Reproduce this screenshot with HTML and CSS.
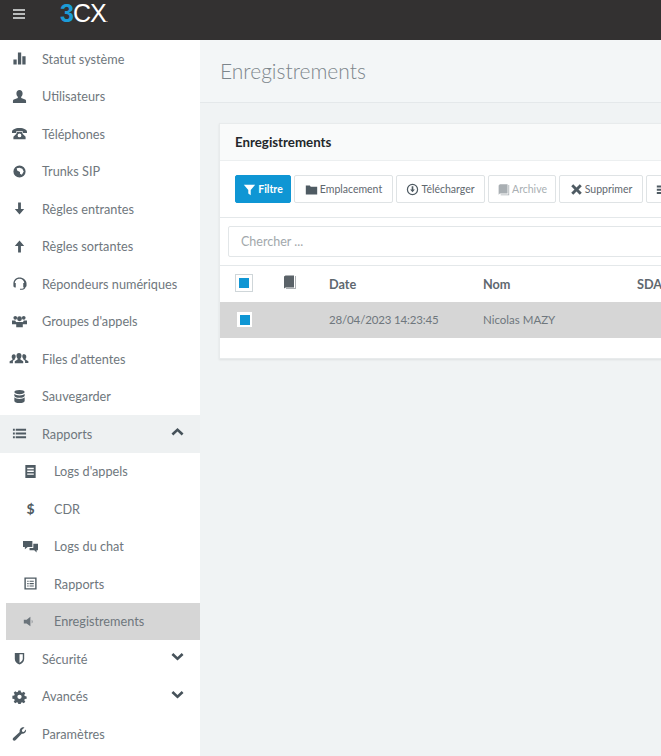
FILE: index.html
```html
<!DOCTYPE html>
<html lang="fr">
<head>
    <meta charset="UTF-8">
    <title>3CX - Enregistrements</title>
    <link rel="stylesheet" href="styles.css">
</head>
<body>
    <header class="topbar">
        <svg class="burger" viewBox="0 0 12 10"><path d="M0 0h12v2H0zM0 4h12v2H0zM0 8h12v2H0z"/></svg>
        <div class="logo"><span class="logo-three">3</span>CX<span class="logo-tm">.</span></div>
    </header>
    <div class="layout">
        <nav class="sidebar">
            <a class="item"><svg class="icon" viewBox="0 0 16 16"><path d="M1.500 9h3.500v5.500H1.500zM6.300 1.500h3.500v13H6.300zM11 5.500h3.500v9H11z"/></svg>Statut système</a>
            <a class="item"><svg class="icon" viewBox="0 0 16 16"><path d="M8 1c2 0 3.300 1.500 3.300 3.800 0 1.500-.7 2.800-1.500 3.500v1.200l4.200 1.800c.7.300 1 .9 1 1.700V15H1v-2c0-.8.300-1.400 1-1.700l4.200-1.800V8.300C5.400 7.600 4.700 6.300 4.700 4.800 4.700 2.500 6 1 8 1z"/></svg>Utilisateurs</a>
            <a class="item"><svg class="icon" viewBox="0 0 16 16"><path d="M0 6c0-2 3-4 8-4s8 2 8 4v1.500h-4.500V5.500h-7v2H0zM4.500 8.500l1-2h5l1 2 3 3V14h-13v-2.500zM8 8a2 2 0 1 0 0 4 2 2 0 0 0 0-4z" fill-rule="evenodd"/></svg>Téléphones</a>
            <a class="item"><svg class="icon" viewBox="0 0 16 16"><path d="M8 1.500a6.500 6.500 0 1 0 0 13 6.500 6.500 0 0 0 0-13zM8 4l3 1 1.500 3-2 3.500-2-1V8.500L5.500 7 5 4.500z" fill-rule="evenodd"/></svg>Trunks SIP</a>
            <a class="item"><svg class="icon" viewBox="0 0 16 16"><path d="M6.500 1.500h3v7h3.500L8 14.500 3 8.500h3.500z"/></svg>Règles entrantes</a>
            <a class="item"><svg class="icon" viewBox="0 0 16 16"><path d="M6.500 14.500V7.500H3L8 1.500l5 6H9.500v7z"/></svg>Règles sortantes</a>
            <a class="item"><svg class="icon" viewBox="0 0 16 16"><path d="M8 1.500c-3.900 0-6.500 2.800-6.500 6.500v2.500c0 1 .7 1.800 1.700 1.800h.8V7.500H2.900C3.200 4.800 5.200 2.900 8 2.900s4.800 1.900 5.100 4.600H12v4.800h.9c-.3.800-1 1.100-1.900 1.200H8.500v1.200H11c1.700 0 3-1 3.400-2.600.7-.3 1.100-1 1.100-1.600V8c0-3.700-3.600-6.500-7.500-6.500z"/></svg>Répondeurs numériques</a>
            <a class="item"><svg class="icon" viewBox="0 0 16 16"><circle cx="3.500" cy="4" r="2"/><circle cx="12.500" cy="4" r="2"/><circle cx="8" cy="5" r="2.600"/><path d="M0 7h3.500l1 2v2H0zM16 7h-3.500l-1 2v2H16zM4.500 8.500h7v5.500h-7z"/></svg>Groupes d'appels</a>
            <a class="item"><svg class="icon icon-wide" viewBox="0 0 20 16"><path d="M10 2c1.800 0 2.700 1.400 2.700 3.100 0 1.300-.5 2.300-1.200 2.900v1l3 2v2H5.500v-2l3-2V8C7.800 7.400 7.300 6.400 7.300 5.100 7.300 3.400 8.200 2 10 2zM4.500 3.500C6 3.500 6.500 4.600 6.500 6c0 1-.4 1.800-1 2.300v.7l-2 1.500v2.500H0v-2l3-1.800V8.300C2.400 7.800 2.200 7 2.200 6c0-1.400.8-2.500 2.300-2.500zM15.500 3.500c1.500 0 2.300 1.100 2.300 2.500 0 1-.2 1.800-.8 2.300v.7l3 1.800v2h-3.500v-2.500l-2-1.500v-.7c-.6-.5-1-1.300-1-2.300 0-1.400.5-2.500 2-2.500z"/></svg>Files d'attentes</a>
            <a class="item"><svg class="icon" viewBox="0 0 16 16"><path d="M8 1c3.300 0 5.500 1 5.500 2.300S11.300 5.600 8 5.600 2.500 4.600 2.500 3.300 4.700 1 8 1zM2.500 5c1 1 3 1.800 5.500 1.800S12.500 6 13.500 5v2.200c0 1.200-2.200 2.200-5.500 2.200s-5.500-1-5.500-2.200zM2.500 8.900c1 1 3 1.700 5.500 1.700s4.500-.7 5.500-1.700v3.800c0 1.300-2.200 2.300-5.500 2.300s-5.500-1-5.500-2.300z"/></svg>Sauvegarder</a>
            <a class="item item-open"><svg class="icon" viewBox="0 0 16 16"><path d="M1 3h2v2H1zM4 3h11v2H4zM1 7h2v2H1zM4 7h11v2H4zM1 11h2v2H1zM4 11h11v2H4z"/></svg>Rapports<svg class="chevron" viewBox="0 0 12 8"><path d="M6 0l6 5.500L10.200 7.500 6 3.500 1.800 7.500 0 5.500z"/></svg></a>
            <div class="submenu">
                <a class="item sub"><svg class="icon" viewBox="0 0 16 16"><path d="M2.500 1h11v14h-11zM4.500 4v1.500h7V4zM4.500 7v1.500h7V7zM4.500 10v1.500h7V10z" fill-rule="evenodd"/></svg>Logs d'appels</a>
                <a class="item sub"><span class="icon dollar">$</span>CDR</a>
                <a class="item sub"><svg class="icon" viewBox="0 0 16 16"><path d="M0 2h10v6.500H5L2 11V8.500H0zM11 5h5v7h-1.500v2.500L12 12H7V9.500h4z"/></svg>Logs du chat</a>
                <a class="item sub"><svg class="icon" viewBox="0 0 16 16"><path d="M1.500 1.500h13v13h-13zM3 3v10h10V3zM4.500 5h1.500v1.200H4.500zM7 5h4.500v1.200H7zM4.500 7.500h1.500v1.200H4.500zM7 7.500h4.500v1.200H7zM4.500 10h1.500v1.200H4.500zM7 10h4.500v1.200H7z" fill-rule="evenodd"/></svg>Rapports</a>
                <a class="item sub item-active"><svg class="icon" viewBox="0 0 16 16"><path d="M3 6h3l4-3v10l-4-3H3zM11.500 6c1 1 1 3 0 4z"/></svg>Enregistrements</a>
            </div>
            <a class="item"><svg class="icon" viewBox="0 0 16 16"><path d="M3 2h10v6.500c0 3-2.500 5-5 6-2.500-1-5-3-5-6zM8 3.500v9c1.800-.8 3.500-2.300 3.500-4.200V3.500z" fill-rule="evenodd"/></svg>Sécurité<svg class="chevron" viewBox="0 0 12 8"><path d="M6 7.500L0 2 1.800 0 6 4 10.200 0 12 2z"/></svg></a>
            <a class="item"><svg class="icon" viewBox="0 0 16 16"><path d="M6.800 1.500h2.400l.4 2 1.200.5 1.700-1.100 1.700 1.700-1.100 1.700.5 1.200 2 .4v2.400l-2 .4-.5 1.200 1.100 1.700-1.700 1.700-1.700-1.100-1.200.5-.4 2H6.800l-.4-2-1.200-.5-1.700 1.100-1.700-1.700 1.100-1.700-.5-1.200-2-.4V7.300l2-.4.5-1.200L1.800 4l1.700-1.700 1.700 1.100 1.200-.5zM8 6a2.300 2.300 0 1 0 0 4.600A2.300 2.300 0 0 0 8 6z" fill-rule="evenodd"/></svg>Avancés<svg class="chevron" viewBox="0 0 12 8"><path d="M6 7.500L0 2 1.800 0 6 4 10.200 0 12 2z"/></svg></a>
            <a class="item"><svg class="icon" viewBox="0 0 16 16"><path d="M15 4.500c0 2.500-2.200 4.300-4.600 3.800L4 15c-.9.900-2.100.9-2.800.2s-.5-1.900.3-2.700l6.700-6.100C7.700 3.800 9.500 1.300 12 1.300c.5 0 .9.100 1.300.3L10.500 4.300l.4 1.700 1.700.4 2.200-2.700c.1.300.2.500.2.800z"/></svg>Paramètres</a>
        </nav>
        <main class="content">
            <div class="page-title">Enregistrements</div>
            <section class="card">
                <div class="card-head">Enregistrements</div>
                <div class="toolbar">
                    <button class="btn btn-primary"><svg viewBox="0 0 16 16"><path d="M1 2h14L9.500 8.500V15l-3-2V8.500z"/></svg>Filtre</button>
                    <button class="btn"><svg class="btn-icon" viewBox="0 0 16 16"><path d="M1 3h5l1 1.500h8V14H1z"/></svg>Emplacement</button>
                    <button class="btn"><svg class="btn-icon" viewBox="0 0 16 16"><path d="M8 1a7 7 0 1 0 0 14A7 7 0 0 0 8 1zm0 1.500a5.500 5.500 0 1 1 0 11 5.500 5.500 0 0 1 0-11zM7 4h2v4h2l-3 3.500L5 8h2z" fill-rule="evenodd"/></svg>Télécharger</button>
                    <button class="btn btn-disabled"><svg class="btn-icon" viewBox="0 0 16 16"><path d="M2 3l1.500-1.500H13V13H3.500L2 14.500zM14 2.500V14H4.500V15H15V2.500z"/></svg>Archive</button>
                    <button class="btn"><svg class="btn-icon" viewBox="0 0 16 16"><path d="M4 1.500L8 5.500l4-4L14.500 4l-4 4 4 4-2.500 2.500-4-4-4 4L1.500 12l4-4-4-4z"/></svg>Supprimer</button>
                    <button class="btn"><svg class="btn-icon" viewBox="0 0 16 16"><path d="M1 3h14v2.500H1zM1 7h14v2.500H1zM1 11h14v2.500H1z"/></svg></button>
                </div>
                <div class="search-row">
                    <input class="search" type="text" placeholder="Chercher ...">
                </div>
                <div class="grid-row grid-head">
                    <span class="check check-head"><i></i></span>
                    <svg class="book" viewBox="0 0 13 14"><path d="M1 1.500L2.500.5H11v12H2.500L1 13.500zM12 1v12.500H3v.5h9.500V1z"/></svg>
                    <span>Date</span>
                    <span>Nom</span>
                    <span>SDA</span>
                </div>
                <div class="grid-row grid-body">
                    <span class="check"><i></i></span>
                    <span></span>
                    <span class="cell-date">28/04/2023 14:23:45</span>
                    <span>Nicolas MAZY</span>
                    <span></span>
                </div>
                <div class="card-foot"></div>
            </section>
        </main>
    </div>
</body>
</html>
```
FILE: styles.css
```css
html, body {
    margin: 0;
    padding: 0;
    height: 100%;
    overflow: hidden;
}
body {
    font-family: 'Lato', sans-serif;
    font-size: 12.700px;
    color: #6f777d;
    background-color: #f0f3f4;
}
.topbar {
    height: 40px;
    background-color: #333131;
    display: flex;
    box-shadow: 0 1px 2px rgba(0, 0, 0, 0.2);
}
.burger {
    width: 12px;
    height: 10px;
    margin: 9px 0 0 13px;
    fill: #b9bbbb;
}
.logo {
    margin: 0 0 0 35px;
    color: #fff;
    font-family: 'Liberation Sans', sans-serif;
    font-size: 25px;
    line-height: 27px;
    letter-spacing: -1px;
}
.logo-three {
    color: #1b9bd7;
    font-weight: 700;
}
.logo-tm {
    font-size: 8px;
}
.layout {
    display: flex;
    height: 716px;
}
.sidebar {
    width: 200px;
    flex-shrink: 0;
    background-color: #fff;
}
.item {
    display: flex;
    align-items: center;
    height: 37.500px;
    padding-left: 42px;
    position: relative;
    box-sizing: border-box;
}
.icon {
    position: absolute;
    left: 12px;
    top: 11px;
    width: 15px;
    height: 15px;
    fill: #4f5b63;
}
.icon-wide {
    left: 9px;
    width: 20px;
}
.chevron {
    position: absolute;
    right: 16px;
    top: 13px;
    width: 13px;
    height: 8px;
    fill: #46525a;
}
.item-open {
    background-color: #eef1f2;
}
.sub {
    padding-left: 54px;
}
.sub .icon {
    left: 23px;
}
.dollar {
    font-size: 14px;
    line-height: 15px;
    font-weight: 700;
    color: #4f5b63;
    text-align: center;
}
.item-active {
    background-color: #d6d6d6;
    margin-left: 6px;
    padding-left: 48px;
}
.sub.item-active .icon {
    left: 15px;
    fill: #6b747b;
}
.content {
    flex: 1;
    min-width: 0;
    overflow: hidden;
}
.page-title {
    height: 63px;
    line-height: 62px;
    padding-left: 20px;
    font-size: 21px;
    font-weight: 300;
    color: #7d868c;
    background-color: #f3f6f7;
    border-bottom: 1px solid #e4e8ea;
    box-sizing: border-box;
}
.card {
    margin: 20px -300px 0 19px;
    background-color: #fff;
    border: 1px solid #e8ebec;
    box-shadow: 0 1px 2px rgba(0, 0, 0, 0.08);
}
.card-head {
    height: 37px;
    line-height: 36px;
    padding-left: 15px;
    font-size: 13.300px;
    font-weight: 700;
    color: #23272a;
    background-color: #f9fafa;
    border-bottom: 1px solid #eceff0;
    box-sizing: border-box;
}
.toolbar {
    display: grid;
    grid-template-columns: 56px 99px 89px 68px 84px 34px;
    column-gap: 3px;
    height: 57px;
    padding: 14px 0 0 15px;
    box-sizing: border-box;
    border-bottom: 1px solid #e4e8ea;
}
.btn {
    display: flex;
    align-items: center;
    justify-content: center;
    height: 28px;
    padding: 0;
    font-family: inherit;
    font-size: 10.500px;
    color: #5f686f;
    background-color: #fff;
    border: 1px solid #dfe3e5;
    border-radius: 2px;
}
.btn svg {
    width: 13px;
    height: 13px;
    margin-right: 2px;
}
.btn-icon {
    fill: #4f5b63;
}
.btn-primary {
    background-color: #0f96d4;
    border-color: #0f96d4;
    color: #fff;
    font-weight: 700;
}
.btn-primary svg {
    fill: #fff;
}
.btn-disabled {
    color: #a9afb3;
}
.btn-disabled .btn-icon {
    fill: #a9afb3;
}
.search-row {
    height: 48px;
    padding: 8px 0 0 8px;
    box-sizing: border-box;
    border-bottom: 1px solid #e4e8ea;
}
.search {
    width: 700px;
    height: 31px;
    padding: 0 12px;
    box-sizing: border-box;
    font-family: inherit;
    font-size: 12.500px;
    background-color: #fff;
    border: 1px solid #e2e6e8;
    border-radius: 2px;
}
.search::placeholder {
    color: #a2a8ac;
}
.grid-row {
    display: grid;
    grid-template-columns: 47px 46px 154px 154px 80px;
    align-items: center;
    padding-left: 16px;
}
.grid-head {
    height: 36px;
    font-weight: 700;
    color: #5f686f;
}
.grid-body {
    height: 36px;
    font-size: 11.500px;
    line-height: 34px;
    background-color: #d6d6d6;
}
.cell-date {
    letter-spacing: -0.150px;
}
.check {
    display: block;
    width: 10px;
    height: 10px;
    padding: 2.500px;
    margin: -1px 0 0 1px;
    background-color: #fff;
}
.check i {
    display: block;
    width: 10px;
    height: 10px;
    background-color: #0f96d4;
}
.check-head {
    padding: 3px;
    margin: -3px 0 0 -1px;
    border: 1px solid #cfd6d9;
}
.book {
    width: 13px;
    height: 14px;
    margin-top: -5px;
    fill: #5a6268;
}
.card-foot {
    height: 20px;
}
```
